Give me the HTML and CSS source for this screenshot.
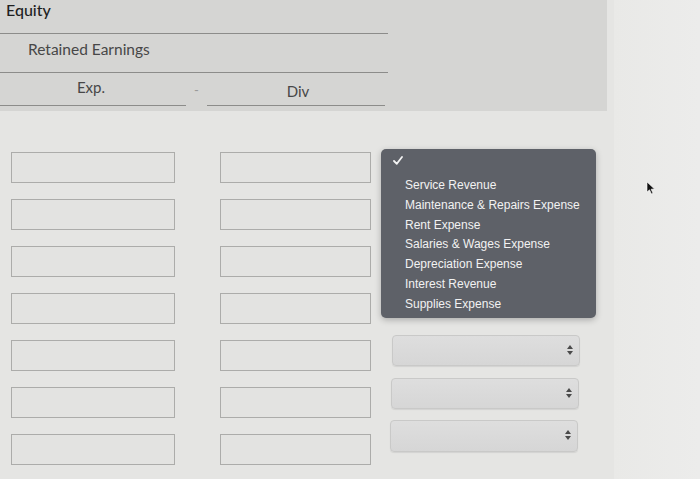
FILE: index.html
```html
<!DOCTYPE html>
<html>
<head>
<meta charset="utf-8">
<link rel="stylesheet" href="styles.css">
</head>
<body>
<div class="page">
  <div class="main">
    <div class="panel">
      <div class="eq-head">
        <div class="row-equity">Equity</div>
        <div class="row-re">Retained Earnings</div>
        <div class="row-split">
          <div class="cell exp">Exp.</div>
          <div class="cell dash">-</div>
          <div class="cell div">Div</div>
        </div>
      </div>
    </div>
    <div class="grid">
      <div class="box"></div><div class="box b2"></div><div class="slot"></div>
      <div class="box"></div><div class="box b2"></div><div class="slot"></div>
      <div class="box"></div><div class="box b2"></div><div class="slot"></div>
      <div class="box"></div><div class="box b2"></div><div class="slot"></div>
      <div class="box"></div><div class="box b2"></div><div class="sel s1"><span class="arrows"><i class="up"></i><i class="down"></i></span></div>
      <div class="box"></div><div class="box b2"></div><div class="sel s2"><span class="arrows"><i class="up"></i><i class="down"></i></span></div>
      <div class="box"></div><div class="box b2"></div><div class="sel s3"><span class="arrows"><i class="up"></i><i class="down"></i></span></div>
    </div>
    <div class="menu">
      <div class="check"><svg width="10" height="9" viewBox="0 0 10 9"><path d="M1 5 L3.8 7.8 L9 1" fill="none" stroke="#f4f4f4" stroke-width="1.8" stroke-linecap="round" stroke-linejoin="round"/></svg></div>
      <ul class="items">
        <li>Service Revenue</li>
        <li>Maintenance &amp; Repairs Expense</li>
        <li>Rent Expense</li>
        <li>Salaries &amp; Wages Expense</li>
        <li>Depreciation Expense</li>
        <li>Interest Revenue</li>
        <li>Supplies Expense</li>
      </ul>
    </div>
  </div>
  <div class="side">
    <svg class="cursor" width="10" height="14" viewBox="0 0 10 14"><path d="M1 1 L1 11 L3.5 8.8 L5.5 13 L7 12.3 L5.1 8.2 L8.5 8 Z" fill="#111" stroke="#fff" stroke-width="0.6"/></svg>
  </div>
</div>
</body>
</html>
```

FILE: styles.css
```css
* { box-sizing: border-box; }
html, body { margin: 0; padding: 0; }
body {
  width: 700px;
  height: 479px;
  overflow: hidden;
  background: #e5e5e3;
  font-family: Lato, "Open Sans", sans-serif;
}
.page {
  display: grid;
  grid-template-columns: 614px 1fr;
  height: 479px;
}
.main {
  position: relative;
  background: #e5e5e3;
}
.side {
  position: relative;
  background: linear-gradient(90deg, #e9e9e7, #ececeb);
}
.panel {
  width: 607px;
  height: 111px;
  background: #d5d5d3;
}
.eq-head {
  width: 388px;
}
.row-equity {
  height: 34px;
  padding-left: 6px;
  font-size: 16px;
  line-height: 20px;
  color: #1f1f1f;
  font-weight: 500;
  border-bottom: 1px solid #8c8c8a;
}
.row-re {
  height: 39px;
  padding-left: 28px;
  padding-top: 5px;
  font-size: 15.5px;
  line-height: 20px;
  color: #474747;
  border-bottom: 1px solid #8c8c8a;
}
.row-split {
  display: grid;
  grid-template-columns: 186px 21px 178px;
  height: 33px;
}
.cell {
  font-size: 15px;
  line-height: 20px;
  color: #474747;
  text-align: center;
}
.exp {
  padding-top: 4px;
  padding-right: 4px;
  border-bottom: 1px solid #8c8c8a;
}
.dash {
  padding-top: 7px;
  color: #9a9a9a;
  font-size: 13px;
}
.div {
  padding-top: 8px;
  padding-left: 4px;
  border-bottom: 1px solid #8c8c8a;
}
.grid {
  display: grid;
  grid-template-columns: 209px 172px 188px;
  grid-auto-rows: 31px;
  row-gap: 16px;
  padding: 41px 0 0 11px;
}
.box {
  border: 1px solid #acacaa;
  background: #e3e3e1;
  width: 164px;
}
.b2 {
  width: 151px;
}
.sel {
  position: relative;
  border: 1px solid #c9c9c8;
  border-radius: 4px;
  background: linear-gradient(#dedede, #d6d6d6);
  box-shadow: 0 1px 1px rgba(0,0,0,0.08);
}
.s1 { margin-top: -5px; height: 31px; }
.s2 { margin-top: -9px; height: 31px; margin-left: -1px; margin-right: 1px; }
.s3 { margin-top: -14px; height: 32px; margin-left: -2px; margin-right: 2px; }
.arrows {
  position: absolute;
  right: 6px;
  top: 9px;
  display: flex;
  flex-direction: column;
  gap: 2px;
}
.arrows i {
  display: block;
  width: 0;
  height: 0;
  border-left: 3px solid transparent;
  border-right: 3px solid transparent;
}
.arrows .up { border-bottom: 4px solid #4a4a4a; }
.arrows .down { border-top: 4px solid #4a4a4a; }
.menu {
  position: absolute;
  left: 381px;
  top: 149px;
  width: 215px;
  height: 169px;
  background: #5e6168;
  border-radius: 5px;
  box-shadow: 0 2px 6px rgba(0,0,0,0.25);
  padding: 7px 0 0 12px;
}
.check {
  height: 17px;
  line-height: 0;
}
.items {
  list-style: none;
  margin: 0;
  padding: 2px 0 0 12px;
  font-family: "Liberation Sans", Arial, sans-serif;
  font-size: 12px;
  color: #f2f2f2;
}
.items li {
  height: 19.8px;
  line-height: 20px;
}
.cursor {
  position: absolute;
  left: 32px;
  top: 181px;
}
```
